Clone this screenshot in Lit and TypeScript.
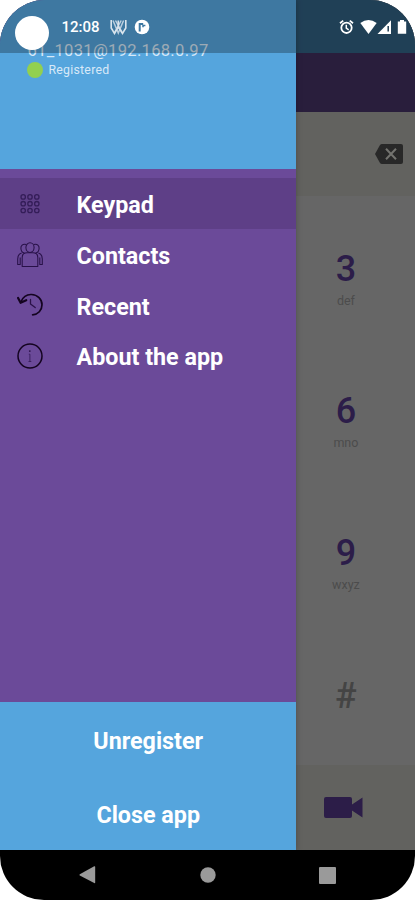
import { LitElement, html, css, svg } from "lit";
import { customElement } from "lit/decorators.js";

const dots = [4.2, 11, 17.8];

const keypadIcon = html`<svg class="icon" viewBox="0 0 26 26">
  <g transform="translate(2 1.7)" fill="none" stroke="#341d58" stroke-width="1.3">
    ${dots.map((y) => dots.map((x) => svg`<circle cx=${x} cy=${y} r="2.2" />`))}
  </g>
</svg>`;

const contactsIcon = html`<svg class="icon" viewBox="0 0 26 26">
  <g fill="none" stroke="#281148" stroke-width="1.05" stroke-linejoin="round">
    <path d="M5.2 24.4V15.5Q5.2 10.8 10 10.8H16Q20.8 10.8 20.8 15.5V24.4Z" />
    <ellipse cx="13" cy="5.6" rx="4.1" ry="4.8" />
    <path d="M9.2 2.5C5.6 1.5 3.7 3.7 3.9 6.3C4 8.7 5.2 10.8 7.4 10.9" />
    <path d="M16.8 2.5C20.4 1.5 22.3 3.7 22.1 6.3C22 8.7 20.8 10.8 18.6 10.9" />
    <path d="M4.6 11C1.7 11.7.7 14 .7 17V22.4H3.2V15.5M21.4 11C24.3 11.7 25.3 14 25.3 17V22.4H22.8V15.5" />
  </g>
</svg>`;

const recentIcon = html`<svg class="icon" viewBox="0 0 26 26">
  <g fill="none" stroke="#140420" stroke-width="1.7" stroke-linecap="round" stroke-linejoin="round">
    <path d="M4.1 9.6C6 4.9 10 2.3 14.5 2.5C20.5 2.7 25 7.2 25 12.8C25 18.3 21 22.6 15.6 22.8" />
    <path d="M1.1 6L3.6 10.8L9.2 8.2" stroke-width="2.2" />
    <path d="M13.5 7.4V12L18.2 15.6" stroke="#2b1248" stroke-width="1.3" />
  </g>
</svg>`;

const aboutIcon = html`<svg class="icon" viewBox="0 0 26 26">
  <circle cx="13" cy="13" r="12" fill="none" stroke="#140420" stroke-width="1.5" />
  <circle cx="12.8" cy="8.1" r=".9" fill="#2b1248" />
  <path d="M11.8 11.2H12.9V18.4M11.5 18.5H14.3" fill="none" stroke="#3b2060" stroke-width="1" />
</svg>`;

@customElement("app-root")
export class AppRoot extends LitElement {
  static styles = css`
    :host {
      display: block;
      width: 415px;
      height: 900px;
      background: #fff;
      font-family: Roboto, "Liberation Sans", sans-serif;
    }
    * { box-sizing: border-box; }
    svg { display: block; flex: none; }
    .phone {
      position: relative;
      height: 900px;
      display: flex;
      flex-direction: column;
      overflow: hidden;
      border-radius: 45px 45px 44px 44px;
      background: #000;
    }
    .screen { display: flex; height: 850px; }
    .drawer {
      width: 296.4px;
      flex: none;
      display: flex;
      flex-direction: column;
      background: #6b4a99;
      box-shadow: 0 0 6px rgba(0, 0, 0, 0.25);
      z-index: 1;
    }
    .header {
      height: 169px;
      padding: 41px 0 0 27px;
      background: #55a5dd;
      color: #d8e9f8;
    }
    .account { font-size: 16.6px; line-height: 20px; letter-spacing: 0.28px; white-space: nowrap; padding-left: 0.5px; }
    .state { display: flex; align-items: center; gap: 5.5px; font-size: 12.3px; line-height: 17px; letter-spacing: 0.25px; }
    .state span { padding-top: 1px; }
    .dot { width: 16px; height: 16px; border-radius: 50%; background: #92d050; }
    .menu { flex: 1; padding-top: 9px; }
    .item {
      height: 50.7px;
      display: flex;
      align-items: center;
      gap: 33.5px;
      padding-left: 17px;
      color: #fff;
      font-size: 23.3px;
      font-weight: 700;
      white-space: nowrap;
    }
    .item span { padding-top: 4px; }
    .selected { background: #5e3f87; }
    .icon { width: 26px; height: 26px; margin-top: 1px; }
    .actions { height: 148px; background: #55a5dd; }
    .action {
      height: 74px;
      padding-top: 3px;
      display: flex;
      align-items: center;
      justify-content: center;
      color: #fff;
      font-size: 23.3px;
      font-weight: 700;
    }
    .dialer { flex: 1; display: flex; flex-direction: column; background: #666; }
    .under-status { height: 53px; background: #2d5877; }
    .toolbar { height: 59px; background: #291e3c; }
    .entry { height: 84px; padding: 0 12px 0 0; display: flex; align-items: center; justify-content: flex-end; background: #62625f; }
    .keys { flex: 1; }
    .key {
      height: 142.3px;
      width: 99px;
      display: flex;
      flex-direction: column;
      align-items: center;
      padding-top: 51px;
    }
    .digit { font-size: 36px; line-height: 44px; font-weight: 500; color: #2c1d49; }
    .letters { font-size: 12.5px; line-height: 20px; color: #4c4c4c; }
    .hash { color: #444; }
    .call { height: 85px; padding-left: 27.6px; display: flex; align-items: center; background: #62625f; }
    .nav { height: 50px; display: flex; align-items: center; justify-content: space-between; padding: 0 79px 0 79px; }
    .status {
      position: absolute;
      inset: 0 0 auto 0;
      height: 52.5px;
      z-index: 2;
      display: flex;
      align-items: center;
      padding: 2px 8px 0 15px;
      background: rgba(0, 0, 0, 0.27);
      color: #fff;
    }
    .camera { width: 34px; height: 34px; border-radius: 50%; background: #fff; margin-top: 11px; }
    .clock { font-size: 15px; font-weight: 500; margin-left: 12.5px; width: 48px; }
    .right { margin-left: auto; }
  `;

  render() {
    const items = [
      { label: "Keypad", icon: keypadIcon },
      { label: "Contacts", icon: contactsIcon },
      { label: "Recent", icon: recentIcon },
      { label: "About the app", icon: aboutIcon },
    ];
    const keys = [["3", "def"], ["6", "mno"], ["9", "wxyz"], ["#", ""]];
    return html`
      <div class="phone">
        <div class="status">
          <div class="camera"></div>
          <div class="clock">12:08</div>
          <svg width="17" height="16" viewBox="0 0 17 16">
            <g fill="none" stroke="#d9e4ed" stroke-width="1.6">
              <path d="M1.2 1V9L4.5 14.5L8.3 8V1.5M8.3 8L12.5 14.5L15.8 9V1" />
              <path d="M3 1.5L8.3 14L13.6 1.5M5.5 1.5L12 13M11.2 1.5L4.8 13" stroke-width="1.5" opacity=".8" />
            </g>
          </svg>
          <svg width="23" height="16" viewBox="0 0 23 16">
            <circle cx="15" cy="8" r="7.3" fill="#fff" />
            <path d="M12.7 12.6V4.9H16.2" fill="none" stroke="#3d78a2" stroke-width="2" />
            <path d="M16 8.2V6.6H18.4" fill="none" stroke="#3d78a2" stroke-width="1.5" />
          </svg>
          <svg class="right" width="70" height="16" viewBox="0 0 70 16">
            <g fill="none" stroke="#fff" stroke-width="1.8">
              <circle cx="9.5" cy="8.8" r="5.2" />
              <path d="M9.3 5.7V9.2L11.7 10.8" stroke-width="1.5" />
              <path d="M3 4.2L6.2 1.6M16 4.2L12.8 1.6" />
            </g>
            <path d="M23.3 4.1Q31.5-1.9 39.7 4.1L31.5 15Z" fill="#fff" />
            <path d="M40.5 15L54 1.2V15Z" fill="#fff" />
            <path d="M51.2 7V12.5" stroke="#203d52" stroke-width="1.5" />
            <path d="M60.8 2.5H63V1H67V2.5H69.2V14.8H60.8Z" fill="#fff" />
          </svg>
        </div>
        <div class="screen">
          <div class="drawer">
            <div class="header">
              <div class="account">61_1031@192.168.0.97</div>
              <div class="state"><div class="dot"></div><span>Registered</span></div>
            </div>
            <div class="menu">
              ${items.map(
                (item, i) => html`<div class="item ${i === 0 ? "selected" : ""}">${item.icon}<span>${item.label}</span></div>`
              )}
            </div>
            <div class="actions">
              <div class="action">Unregister</div>
              <div class="action">Close app</div>
            </div>
          </div>
          <div class="dialer">
            <div class="under-status"></div>
            <div class="toolbar"></div>
            <div class="entry">
              <svg width="28" height="20" viewBox="0 0 28 20">
                <path d="M7 0H26Q28 0 28 2V18Q28 20 26 20H7Q5.8 20 5 19L0 10L5 1Q5.8 0 7 0Z" fill="#282828" />
                <path d="M11 4.8L21 15.2M21 4.8L11 15.2" stroke="#73736f" stroke-width="2" />
              </svg>
            </div>
            <div class="keys">
              ${keys.map(
                ([digit, letters]) => html`<div class="key">
                  <div class="digit ${digit === "#" ? "hash" : ""}">${digit}</div>
                  <div class="letters">${letters}</div>
                </div>`
              )}
            </div>
            <div class="call">
              <svg width="39" height="21" viewBox="0 0 39 21">
                <path d="M2 0H26Q28 0 28 2V7.5L38.5.5V20.5L28 13.5V19Q28 21 26 21H2Q0 21 0 19V2Q0 0 2 0Z" fill="#2c1d48" />
              </svg>
            </div>
          </div>
        </div>
        <div class="nav">
          <svg width="17" height="18" viewBox="0 0 17 18"><path d="M.8 8.2L15.2.3Q16.2 0 16.2 1V16.5Q16.2 17.5 15.2 17L.8 9.6Q0 8.9.8 8.2Z" fill="#9a9a9a" /></svg>
          <svg width="16" height="16" viewBox="0 0 16 16"><circle cx="8" cy="8" r="7.7" fill="#9a9a9a" /></svg>
          <svg width="17" height="17" viewBox="0 0 17 17"><rect width="17" height="17" rx="1" fill="#9a9a9a" /></svg>
        </div>
      </div>
    `;
  }
}
